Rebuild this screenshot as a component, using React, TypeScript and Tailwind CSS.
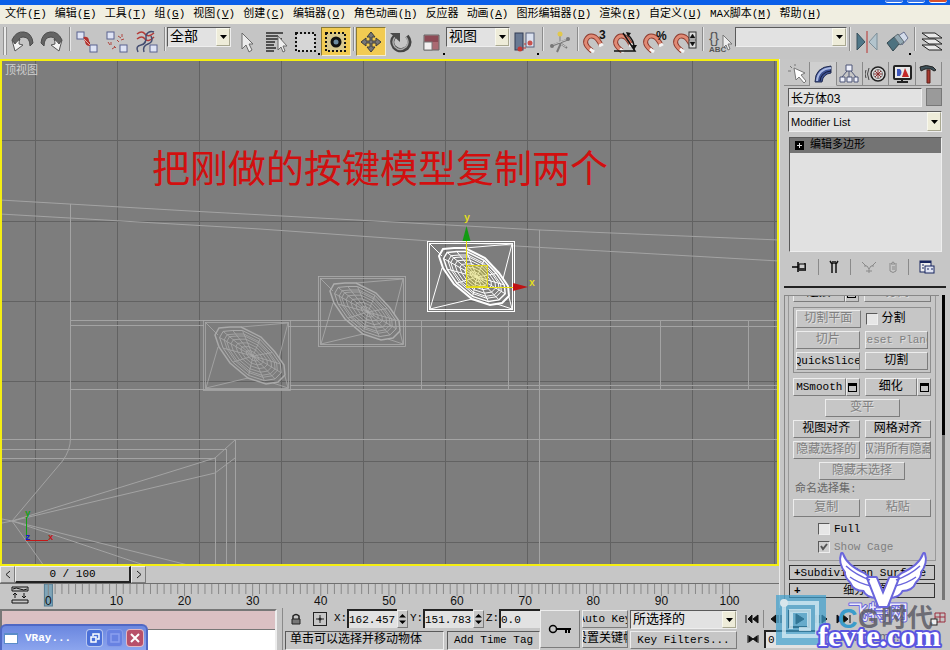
import React from "react";
import clsx from "clsx";

const raised =
  "border border-t-[#ededed] border-l-[#ededed] border-r-[#7c7c7c] border-b-[#7c7c7c]";
const sunken =
  "border border-t-[#5a5a5a] border-l-[#5a5a5a] border-r-[#eeeeee] border-b-[#eeeeee]";

const menus: [string, string][] = [
  ["文件", "F"],
  ["编辑", "E"],
  ["工具", "T"],
  ["组", "G"],
  ["视图", "V"],
  ["创建", "C"],
  ["编辑器", "O"],
  ["角色动画", "h"],
  ["反应器", ""],
  ["动画", "A"],
  ["图形编辑器", "D"],
  ["渲染", "R"],
  ["自定义", "U"],
  ["MAX脚本", "M"],
  ["帮助", "H"],
];

/* ---------- shared controls ---------- */

const Svg = ({ w = 28, h = 28, children }: { w?: number; h?: number; children: React.ReactNode }) => (
  <svg width={w} height={h} viewBox={`0 0 ${w} ${h}`} fill="none" aria-hidden="true" className="shrink-0">
    {children}
  </svg>
);

interface DropProps {
  label: string;
  value: string;
  className?: string;
  textClass?: string;
}

const Drop = ({ label, value, className, textClass = "text-sm" }: DropProps) => (
  <div className={clsx("relative shrink-0 bg-[#e2e2e2]", sunken, className)}>
    <select
      aria-label={label}
      className={clsx("block h-full w-full appearance-none bg-transparent pr-4 pl-0.5 leading-4 outline-none", textClass)}
    >
      <option>{value}</option>
    </select>
    <span className="pointer-events-none absolute inset-y-0 right-0 flex w-[14px] items-center justify-center border border-[#a9a891] border-t-[#f8f8ee] border-l-[#f8f8ee] bg-[#eeecd9]">
      <svg width="7" height="4" viewBox="0 0 7 4" aria-hidden="true">
        <path d="M0 0h7L3.500 4z" fill="#000" />
      </svg>
    </span>
  </div>
);

interface ToolProps {
  label: string;
  active?: boolean;
  flyout?: boolean;
  children: React.ReactNode;
}

const Tool = ({ label, active, flyout, children }: ToolProps) => (
  <button
    type="button"
    aria-label={label}
    className={clsx(
      "relative flex h-[29px] w-[30px] shrink-0 items-center justify-center border",
      active
        ? "border-t-[#8b7a35] border-r-[#f5efd0] border-b-[#f5efd0] border-l-[#8b7a35] bg-[#f2cb52]"
        : "border-transparent",
    )}
  >
    <Svg>{children}</Svg>
    {flyout && <span className="absolute right-0 bottom-0 h-0.5 w-0.5 bg-black" />}
  </button>
);

const Sep = () => (
  <span className="flex h-[24px] w-[5px] shrink-0 justify-center">
    <span className="w-0.5 border-r border-l border-r-[#e6e6e6] border-l-[#8c8c8c]" />
  </span>
);

// tilted horseshoe, poles at the lower right
const Magnet = () => (
  <>
    <path d="M11 23q-8-6-6-11 3-6 9-3 3 2 6 8" stroke="#8c3a2d" strokeWidth="5" />
    <path d="M11 23q-8-6-6-11 3-6 9-3 3 2 6 8" stroke="#e08a75" strokeWidth="3" />
    <path d="M9 21l4 3M18 18l4-2" stroke="#f4f4f4" strokeWidth="3" />
  </>
);

const Box = ({ x, y }: { x: number; y: number }) => (
  <rect x={x} y={y} width="7" height="7" fill="#dfe4f5" stroke="#5a6390" />
);

/* ---------- main toolbar ---------- */

const Toolbar = () => (
  <div className="flex h-[35px] shrink-0 items-start overflow-hidden bg-[#c5c5c5] pt-[3px]">
    <span className="ml-[3px] h-[28px] w-1 shrink-0 border-r border-l border-[#929292] bg-[#e9e9e9]" />
    <Tool label="撤销">
      <path d="M4 12q4-9 12-8 8 1 9 11l-3 3q0-9-7-9-5 0-6 8z" fill="#646464" stroke="#4c4c4c" />
      <path d="M4 12l3 11 8-6-4-1q0-3 1-5-4 3-5 5z" fill="#f3f3f3" stroke="#555" />
    </Tool>
    <Tool label="重做">
      <path d="M24 12q-4-9-12-8-8 1-9 11l3 3q0-9 7-9 5 0 6 8z" fill="#646464" stroke="#4c4c4c" />
      <path d="M24 12l-3 11-8-6 4-1q0-3-1-5 4 3 5 5z" fill="#f3f3f3" stroke="#555" />
    </Tool>
    <Sep />
    <Tool label="选择并链接">
      <Box x={4} y={4} />
      <Box x={17} y={17} />
      <path d="M11 11q3-1 3 2t3 3" stroke="#b2332f" strokeWidth="4" />
      <path d="M11 11l6 6" stroke="#e9aaa2" strokeWidth="1" />
    </Tool>
    <Tool label="断开链接">
      <Box x={4} y={4} />
      <Box x={17} y={17} />
      <path d="M5 14l2 3M8 14v3M15 8l3 2M19 6v3M14 12l2 2M18 12l3-1M11 18l2 2M9 21l3-2" stroke="#b04740" />
    </Tool>
    <Tool label="绑定到空间扭曲">
      <path d="M4 6q5-4 8 0t9-1M4 11q5-4 8 0t9-2" stroke="#b53b38" strokeWidth="1.500" />
      <path d="M5 24q-3-6 3-7t5-10q3-5 8-3M11 24q-2-6 4-8t3-8" stroke="#444d70" strokeWidth="1.500" />
      <Box x={17} y={17} />
    </Tool>
    <Sep />
    <Drop label="选择过滤器" value="全部" className="h-5 w-[64px]" />
    <Tool label="选择对象">
      <path d="M10 5v16l4-4 3 7 3-2-3-6h4z" fill="#ececec" stroke="#6a6a6a" />
    </Tool>
    <Tool label="按名称选择">
      <path d="M4 5h17M4 8h12M4 11h16M4 14h9M4 17h8M4 20h10M4 23h8" stroke="#2a2a2a" strokeWidth="1.500" />
      <path d="M16 8v14l3-3 2 5 2-1-2-5h4z" fill="#efefef" stroke="#6a6a6a" />
    </Tool>
    <Tool label="矩形选择区域" flyout>
      <rect x="5" y="6" width="18" height="17" fill="#d6d6d6" />
      <rect x="4" y="5" width="19" height="18" stroke="#111" strokeWidth="2" strokeDasharray="2 2" />
    </Tool>
    <Tool label="窗口/交叉" active>
      <rect x="4" y="5" width="19" height="18" fill="#d9c98d" stroke="#111" strokeWidth="2" strokeDasharray="2 2" />
      <circle cx="14" cy="14" r="5.500" fill="#111" />
      <circle cx="14" cy="14" r="2.500" fill="#6d8ba0" />
    </Tool>
    <Sep />
    <Tool label="选择并移动" active>
      <path
        d="M14 4l4 5h-3v4h4v-3l5 4-5 4v-3h-4v4h3l-4 5-4-5h3v-4H9v3l-5-4 5-4v3h4V9h-3z"
        fill="#777"
        stroke="#3c3c3c"
      />
    </Tool>
    <Tool label="选择并旋转">
      <path d="M8 8q-5 5-1 11 6 6 13 1 5-6 0-12" stroke="#444" strokeWidth="4" />
      <path d="M8 9q-4 5 0 10 5 5 11 0 4-5 0-10" stroke="#aaa" strokeWidth="1.500" />
      <path d="M3 5h10v9z" fill="#4b4b4b" />
    </Tool>
    <Tool label="选择并缩放" flyout>
      <path d="M7 7h15v15H7z" fill="#ab6a72" stroke="#666" />
      <path d="M8 8h13v6H8z" fill="#8d4a55" />
      <rect x="7" y="14" width="8" height="8" fill="#f3f0f0" stroke="#777" />
    </Tool>
    <Drop label="参考坐标系" value="视图" className="h-5 w-[64px]" />
    <Tool label="使用轴点中心" flyout>
      <rect x="4" y="5" width="8" height="17" fill="#697993" stroke="#333c55" />
      <rect x="15" y="5" width="8" height="14" fill="#dbe1ee" stroke="#56617d" />
      <circle cx="9" cy="21" r="2.500" fill="#c13a36" />
      <circle cx="19" cy="15" r="2.500" fill="#c9514c" />
      <path d="M12 20h3M15 16h-2" stroke="#b33" />
    </Tool>
    <Sep />
    <Tool label="选择并操纵">
      <path d="M14 6v10M5 18l18-7M11 24l4-9M21 20l-7-5" stroke="#7a7a7a" strokeWidth="2" />
      <path d="M14 6v9M6 17l16-6M15 16l5 3" stroke="#c9c9c9" />
      <circle cx="14" cy="6" r="2.500" fill="#e2c84b" />
      <circle cx="22" cy="11" r="2" fill="#777" />
      <circle cx="6" cy="18" r="2" fill="#777" />
    </Tool>
    <Sep />
    <Tool label="三维捕捉">
      <Magnet />
      <text x="18" y="11" fontSize="12" fontWeight="700" fontFamily="Liberation Sans, sans-serif" fill="#111">3</text>
    </Tool>
    <Tool label="角度捕捉">
      <Magnet />
      <path d="M3 23h21L12 5M17 7q6 5 6 13" stroke="#111" strokeWidth="1.500" />
      <path d="M15 4l5 1-3 4zM21 17h5l-3 5z" fill="#111" />
    </Tool>
    <Tool label="百分比捕捉">
      <Magnet />
      <text x="15" y="12" fontSize="12" fontWeight="700" fontFamily="Liberation Sans, sans-serif" fill="#111">%</text>
    </Tool>
    <Tool label="微调器捕捉">
      <Magnet />
      <rect x="18" y="4" width="7" height="16" fill="#ddd" stroke="#333" />
      <path d="M19 10l2.500-4 2.500 4zM19 14h5l-2.500 4zM18 12h7" fill="#111" stroke="#111" strokeWidth=".5" />
    </Tool>
    <Sep />
    <Tool label="编辑命名选择集">
      <text x="3" y="15" fontSize="15" fontFamily="Liberation Sans, sans-serif" fill="#555">{"{}"}</text>
      <text x="3" y="24" fontSize="8" fontWeight="700" fontFamily="Liberation Sans, sans-serif" fill="#555">ABC</text>
      <path d="M17 7v13l3-3 2 5 2-1-2-5h4z" fill="#efefef" stroke="#777" />
    </Tool>
    <Drop label="命名选择集" value="" className="h-5 w-[112px]" />
    <Sep />
    <Tool label="镜像">
      <path d="M4 5v17l8-8z" fill="#4f7788" stroke="#38515c" />
      <path d="M24 5v17l-8-8z" fill="#b3c4cd" stroke="#7d8f99" />
      <path d="M14 3v22" stroke="#b8332f" />
    </Tool>
    <Tool label="对齐" flyout>
      <path d="M4 15l7-6 6 6-7 8z" fill="#4d7280" stroke="#33474f" />
      <path d="M15 8l6-4 4 6-6 7z" fill="#d3dbea" stroke="#6a7390" />
      <path d="M11 9l4-3 6 8-4 3z" fill="#94a9b4" stroke="#5d6a70" />
    </Tool>
    <Sep />
    <Tool label="层管理器">
      <path d="M4 17h13l7 5H11zM4 11h13l7 5H11zM4 5h13l7 5H11z" fill="#e9e9e9" stroke="#222" />
    </Tool>
  </div>
);

/* ---------- viewport ---------- */

const gridX = [35, 117, 199, 281, 363, 445, 527, 610, 692, 774];
const gridY = [140, 221, 301, 381, 461, 542];

const outline = [
  [12, 15], [16, 8], [27, 7], [38, 7], [58, 17], [72, 32], [81, 45],
  [82, 55], [75, 62], [63, 64], [45, 58], [27, 43], [16, 27],
];
const centre = [50, 36];

const ring = (k: number) =>
  outline
    .map(([x, y]) => `${(centre[0] + (x - centre[0]) * k).toFixed(1)},${(centre[1] + (y - centre[1]) * k).toFixed(1)}`)
    .join(" ");

// one key cap: a box with nested oval rings
const KeyMesh = ({ x, y, color, bold }: { x: number; y: number; color: string; bold?: boolean }) => (
  <g transform={`translate(${x} ${y})`} stroke={color} fill="none" strokeWidth={bold ? 1 : 0.8}>
    <rect x=".5" y=".5" width="87" height="70" />
    <rect x="2.500" y="2.500" width="83" height="66" />
    <path d="M3 3l12 12M3 68l12-41M3 68l42-10M85 3l-9 35M85 3L38 7M85 68l-3-12M85 68l-15-5" />
    <polygon points={ring(1)} strokeWidth={bold ? 2 : 1.5} />
    <polygon points={ring(0.88)} strokeWidth={bold ? 1.5 : 1} />
    {[0.76, 0.69, 0.58, 0.45, 0.32, 0.18].map((k) => (
      <polygon key={k} points={ring(k)} />
    ))}
    {outline.map(([px, py], i) => (
      <line
        key={i}
        x1={centre[0]}
        y1={centre[1]}
        x2={centre[0] + (px - centre[0]) * 0.88}
        y2={centre[1] + (py - centre[1]) * 0.88}
      />
    ))}
  </g>
);

const Viewport = () => (
  <div className="relative min-h-0 flex-1 overflow-hidden border-2 border-[#f4ee12] bg-[#7d7d7d]">
    <svg className="block h-full w-full" viewBox="2 61 775 503" preserveAspectRatio="xMinYMin slice" aria-label="顶视图">
      <g stroke="#626262" strokeWidth="1">
        {gridX.map((x) => (
          <line key={x} x1={x + 0.5} x2={x + 0.5} y1="61" y2="566" />
        ))}
        {gridY.map((y) => (
          <line key={y} x1="0" x2="779" y1={y + 0.5} y2={y + 0.5} />
        ))}
      </g>
      <g stroke="#a3a3a3" fill="none" strokeWidth="1">
        <path d="M0 200l190 11 350 19 239 10M0 214l260 15 170 12 120 7 229 13" />
        <path d="M70.500 204v234q0 12-8 23L12 521l32 45" />
        <path d="M70 320.500h709M70 325.500h134M288 326.500h491M70 389.500h709M290 385.500h489" />
        <path d="M421.500 320v70M508.500 320v70M539.500 230v336M660.500 320v70M748.500 320v70" />
        <path d="M0 439.500h779M0 449.500h226M0 458.500h215M215.500 458v108M226.500 449v117M235.500 440v126" />
        <path d="M215 458l20-18M215 473l20-15M12 521l203-63M12 521l203-48M12 521l180 45M12 521l135 45M2 519l10 2-10 2" />
      </g>
      <KeyMesh x={203} y={320} color="#a9a9a9" />
      <KeyMesh x={318} y={276} color="#adadad" />
      <KeyMesh x={427} y={241} color="#ffffff" bold />

      {/* move gizmo */}
      <rect x="466.500" y="265.500" width="21" height="21" fill="#d8cf2e" fillOpacity=".4" stroke="#e0d51c" />
      <path d="M466.500 287V240M466 287.500h48" stroke="#ece414" />
      <path d="M466.500 226l-4 15h8z" fill="#129b12" />
      <path d="M528 287l-15-4v8z" fill="#c01313" />
      <text x="464" y="221" fontSize="10" fontFamily="Liberation Mono, monospace" fontWeight="700" fill="#e2dc1c">y</text>
      <text x="529" y="286" fontSize="10" fontFamily="Liberation Mono, monospace" fontWeight="700" fill="#e2dc1c">x</text>

      {/* world axis */}
      <path d="M26.500 540V517" stroke="#12a012" />
      <path d="M26 540.500h22" stroke="#c31818" />
      <text x="25" y="516" fontSize="9" fontFamily="Liberation Mono, monospace" fontWeight="700" fill="#12a012">y</text>
      <text x="48" y="540" fontSize="9" fontFamily="Liberation Mono, monospace" fontWeight="700" fill="#c31818">x</text>
      <text x="25" y="540" fontSize="9" fontFamily="Liberation Mono, monospace" fontWeight="700" fill="#1818c8">z</text>

      <text x="5" y="74" fontSize="11" fontFamily="Noto Sans CJK SC, sans-serif" fill="#d0d0d0">顶视图</text>
      <text x="152" y="182" fontSize="38" fontFamily="Noto Sans CJK SC, sans-serif" fontWeight="400" fill="#d20f0f">
        把刚做的按键模型复制两个
      </text>
    </svg>
  </div>
);

/* ---------- time slider and track bar ---------- */

const TimeSlider = () => (
  <div className="flex h-[17px] shrink-0 items-stretch text-[11px] leading-[14px]">
    <button type="button" aria-label="上一帧" className={clsx("flex w-[15px] items-center justify-center", raised)}>
      <Svg w={6} h={9}><path d="M5 1L1 4.500 5 8" stroke="#222" /></Svg>
    </button>
    <button type="button" className="w-[116px] border border-t-[#ededed] border-r-2 border-b-2 border-l-[#ededed] border-r-[#222] border-b-[#222]">
      0 / 100
    </button>
    <button type="button" aria-label="下一帧" className={clsx("flex w-[15px] items-center justify-center", raised)}>
      <Svg w={6} h={9}><path d="M1 1l4 3.500L1 8" stroke="#222" /></Svg>
    </button>
  </div>
);

const tickX = (n: number) => `${6.2 + n * 0.8745}%`;

const TrackBar = () => (
  <div className="h-[25px] shrink-0 border-t border-[#6f6f6f]">
    <svg className="block h-6 w-full" aria-label="轨迹栏">
      <rect x="5.700%" y="0" width="8" height="22" fill="#7fa5b8" stroke="#557c92" />
      {Array.from({ length: 101 }, (_, n) => (
        <line key={n} x1={tickX(n)} x2={tickX(n)} y1="0" y2={n % 10 ? 10 : 12} stroke="#888" />
      ))}
      {Array.from({ length: 11 }, (_, n) => (
        <text key={n} x={tickX(n * 10)} y="21" textAnchor="middle" fontSize="12" fontFamily="Liberation Sans, sans-serif" fill="#111">
          {n * 10}
        </text>
      ))}
      <path d="M12 3h16v4H12zM12 16h16v3H12zM13 5q3-2 7 0t7 0M15 14V9m-2 2l2-2 2 2M24 9v5m-2-2l2 2 2-2" stroke="#111" fill="none" />
    </svg>
  </div>
);

/* ---------- command panel ---------- */

const tabs: [string, React.ReactNode][] = [
  ["创建", <path d="M8 5l2 12 3-3 5 6 2-2-5-6 4-2zM4 3l2 2M9 1v2M2 8h3" fill="#fff" stroke="#777" />],
  [
    "修改",
    <>
      <path d="M3 19Q3 4 19 3v7q-8 1-9 9z" fill="#3d5192" stroke="#222c50" />
      <path d="M5 18Q6 6 19 5" stroke="#a9b8e2" strokeWidth="2" />
      <path d="M8 18q1-9 11-10" stroke="#141b3a" />
    </>,
  ],
  ["层次", <path d="M8 2h6v6H8zM2 14h5v5H2zM9 14h5v5H9zM16 14h4v5h-4zM11 8v6M9 8l-5 6M13 8l5 6" fill="#eef0fa" stroke="#4c5577" />],
  [
    "运动",
    <>
      <circle cx="13" cy="11" r="7" fill="#ddd" stroke="#222" strokeWidth="1.500" />
      <circle cx="13" cy="11" r="4.500" stroke="#777" />
      <path d="M13 7v8M9 11h8M10 8l6 6M16 8l-6 6" stroke="#8c3030" />
      <path d="M4 5q-3 6 0 12M1 7q-2 4 0 8" stroke="#444" />
    </>,
  ],
  [
    "显示",
    <>
      <rect x="3" y="3" width="17" height="13" rx="1" fill="#e8e8e8" stroke="#222" strokeWidth="2" />
      <path d="M6 6h3q3 3 0 7H6z" fill="#3e57bd" />
      <path d="M11 14l3-9 4 9z" fill="#c32828" />
      <path d="M6 19h11M11 16v3" stroke="#222" strokeWidth="2" />
    </>,
  ],
  [
    "工具",
    <>
      <path d="M3 4q6-3 13 0l3 3-2 1-3-2H8L4 8z" fill="#3d5058" stroke="#222" />
      <path d="M10 7h3v13h-3z" fill="#a83a30" stroke="#5e201b" />
    </>,
  ],
];

interface PBtnProps {
  children: React.ReactNode;
  off?: boolean;
  className?: string;
}

const PBtn = ({ children, off, className = "flex-1" }: PBtnProps) => (
  <button
    type="button"
    disabled={off}
    className={clsx(
      "flex h-[18px] min-w-0 items-center justify-center overflow-hidden leading-4 whitespace-nowrap",
      raised,
      off ? "text-[#808080] [text-shadow:1px_1px_0_#dedede]" : "text-black",
      className,
    )}
  >
    {children}
  </button>
);

const SettingsBtn = () => (
  <button type="button" aria-label="设置" className={clsx("flex h-[18px] w-[14px] shrink-0 items-center justify-center", raised)}>
    <Svg w={9} h={9}>
      <rect x=".5" y=".5" width="8" height="8" stroke="#000" />
      <path d="M0 2h9" stroke="#000" strokeWidth="2" />
    </Svg>
  </button>
);

const Row = ({ children }: { children: React.ReactNode }) => <div className="flex gap-[5px]">{children}</div>;

const Check = ({ label, checked, off }: { label: string; checked?: boolean; off?: boolean }) => (
  <label className={clsx("flex h-[18px] items-center gap-1", off && "text-[#808080]")}>
    <input
      type="checkbox"
      defaultChecked={checked}
      disabled={off}
      className={clsx("peer h-3 w-3 shrink-0 appearance-none", sunken, off ? "bg-[#cfcfcf]" : "bg-[#e6e6e6]")}
    />
    <svg width="8" height="8" viewBox="0 0 8 8" aria-hidden="true" className="invisible -ml-[14px] mr-0.5 peer-checked:visible">
      <path d="M1 3l2 3 4-5" fill="none" stroke="#555" strokeWidth="2" />
    </svg>
    {label}
  </label>
);

const Rollout = ({ title, centred }: { title: string; centred?: boolean }) => (
  <button type="button" className="flex h-[15px] w-full items-center border border-[#333] px-1 leading-3 whitespace-nowrap">
    <span className="font-bold">+</span>
    <span className={clsx(centred && "flex-1 text-center")}>{title}</span>
  </button>
);

const CommandPanel = () => (
  <aside className="flex w-[171px] shrink-0 flex-col border-l border-[#e8e8e8] pr-2 pl-1">
    <div className="flex h-[27px] shrink-0 pt-[3px]" role="tablist">
      {tabs.map(([name, icon], i) => (
        <button
          key={name}
          type="button"
          role="tab"
          aria-selected={i === 1}
          aria-label={name}
          className={clsx(
            "flex flex-1 items-center justify-center border-r border-b border-r-[#8a8a8a]",
            i === 1 ? "border-b-transparent bg-[#cfcfcf]" : "border-b-[#8a8a8a]",
          )}
        >
          <Svg w={22} h={22}>{icon}</Svg>
        </button>
      ))}
    </div>
    <div className="mt-0.5 flex gap-1 pl-1">
      <input
        aria-label="对象名称"
        defaultValue="长方体03"
        className={clsx("h-[19px] min-w-0 flex-1 bg-[#e2e2e2] px-0.5 font-['Liberation_Sans','Noto_Sans_CJK_SC',sans-serif] text-xs outline-none", sunken)}
      />
      <button type="button" aria-label="对象颜色" className="h-[18px] w-4 border border-[#777] bg-[#9a9a9a]" />
    </div>
    <Drop
      label="修改器列表"
      value="Modifier List"
      className="mt-1 ml-1 h-[21px]"
      textClass="font-['Liberation_Sans',sans-serif] text-[11px]"
    />
    <div className={clsx("mt-[5px] ml-[5px] h-[115px] shrink-0 bg-[#e1e1e1]", sunken)}>
      <div className="flex h-[15px] items-center gap-[6px] bg-[#747474] pl-[5px] text-[11px] leading-[15px]">
        <Svg w={9} h={9}>
          <path d="M0 0h9v9H0z" fill="#000" />
          <path d="M2 4.500h5M4.500 2v5" stroke="#ddd" />
        </Svg>
        编辑多边形
      </div>
    </div>
    <div className="mt-[5px] flex h-[20px] shrink-0 items-center justify-between px-[7px]">
      <button type="button" aria-label="锁定堆栈">
        <Svg w={17} h={14}>
          <path d="M1 7h6M7 2v10M14 3v8" stroke="#000" strokeWidth="1.500" />
          <path d="M8 4h6v6H8z" fill="#ccc" stroke="#000" />
          <path d="M8 8h6v3H8z" fill="#333" />
        </Svg>
      </button>
      <span className="h-4 w-px bg-[#8a8a8a]" />
      <button type="button" aria-label="显示最终结果">
        <Svg w={12} h={14}>
          <path d="M2 1l2 3v9M10 1L8 4v9M5 1v3M7 1v3" stroke="#111" strokeWidth="1.500" />
        </Svg>
      </button>
      <span className="h-4 w-px bg-[#8a8a8a]" />
      <button type="button" aria-label="使唯一" disabled>
        <Svg w={16} h={14}>
          <path d="M1 2l4 4M15 2l-4 4M3 6h3l2 3 2-3h3M8 9v4M5 11h6" stroke="#8a8a8a" />
        </Svg>
      </button>
      <button type="button" aria-label="移除修改器" disabled>
        <Svg w={12} h={14}>
          <path d="M3 5v6q3 3 6 0V5M2 4h8M4 4q2-4 4 0M5 7h3M5 9h3" stroke="#8a8a8a" />
        </Svg>
      </button>
      <span className="h-4 w-px bg-[#8a8a8a]" />
      <button type="button" aria-label="配置修改器集">
        <Svg w={16} h={14}>
          <rect x="1" y="1" width="11" height="11" fill="#eee" stroke="#17255e" />
          <path d="M1 2h11" stroke="#17255e" strokeWidth="2" />
          <rect x="6" y="6" width="9" height="7" fill="#dfe3f2" stroke="#17255e" />
          <path d="M3 5h2M3 8h2M8 9h2M12 9h2" stroke="#17255e" />
        </Svg>
      </button>
    </div>
    <div className="mt-[9px] mr-[-4px] h-0.5 shrink-0 bg-[#222]" />

    <div className="mt-[7px] mr-[-3px] flex min-h-0 flex-1 gap-[3px]">
      <div className="flex min-w-0 flex-1 flex-col overflow-hidden border-t border-l border-[#888]">
        <div className="mx-[3px] flex shrink-0 flex-col gap-[3px] border-r border-b border-l border-[#999] px-1 pb-1">
          <div className="-mt-[12px] flex gap-[5px]">
            <div className="flex flex-1">
              <PBtn>连接</PBtn>
              <SettingsBtn />
            </div>
            <PBtn off>分离</PBtn>
          </div>
          <fieldset className="my-0.5 flex flex-col gap-[3px] border border-[#8e8e8e] p-[2px]">
            <Row>
              <PBtn off>切割平面</PBtn>
              <div className="flex-1"><Check label="分割" /></div>
            </Row>
            <Row>
              <PBtn off>切片</PBtn>
              <PBtn off className="flex-1 text-[11px]">Reset Plane</PBtn>
            </Row>
            <Row>
              <PBtn className="flex-1 text-[11px]">QuickSlice</PBtn>
              <PBtn>切割</PBtn>
            </Row>
          </fieldset>
          <Row>
            <div className="flex min-w-0 flex-1">
              <PBtn className="flex-1 text-[11px]">MSmooth</PBtn>
              <SettingsBtn />
            </div>
            <div className="flex min-w-0 flex-1">
              <PBtn>细化</PBtn>
              <SettingsBtn />
            </div>
          </Row>
          <PBtn off className="w-[75px] self-center">变平</PBtn>
          <Row>
            <PBtn>视图对齐</PBtn>
            <PBtn>网格对齐</PBtn>
          </Row>
          <Row>
            <PBtn off>隐藏选择的</PBtn>
            <PBtn off>取消所有隐藏</PBtn>
          </Row>
          <PBtn off className="w-[86px] self-center">隐藏未选择</PBtn>
          <p className="-mt-0.5 h-[15px] pl-0.5 text-[11px] leading-4 text-[#666]">命名选择集:</p>
          <Row>
            <PBtn off>复制</PBtn>
            <PBtn off>粘贴</PBtn>
          </Row>
          <div className="pl-[25px] text-[11px]">
            <Check label="Full" />
            <Check label="Show Cage" checked off />
          </div>
        </div>
        <div className="mt-1 flex flex-col gap-[3px] px-1 text-[11px]">
          <Rollout title="Subdivision Surface" />
          <Rollout title="细分置换" centred />
        </div>
      </div>
      <div className="mb-2 flex w-[3px] flex-col">
        <span className="h-[140px] bg-black" />
        <span className="flex-1 bg-[#777]" />
      </div>
    </div>
  </aside>
);

/* ---------- status bar ---------- */

const Coord = ({ axis, value, spin = true }: { axis: string; value: string; spin?: boolean }) => (
  <div className={clsx("flex items-center", spin ? "shrink-0" : "min-w-0 flex-1")}>
    <label htmlFor={`coord-${axis}`} className="w-[13px] text-[11px]">{axis}:</label>
    <input
      id={`coord-${axis}`}
      defaultValue={value}
      className={clsx(
        "h-[19px] border-t-2 border-l-2 border-[#222] bg-[#e2e2e2] text-[11px] outline-none",
        spin ? "w-[50px]" : "w-full min-w-0",
      )}
    />
    {spin && (
      <button type="button" aria-label={`${axis} 微调`} className={clsx("flex h-[18px] w-[11px] items-center justify-center", raised)}>
        <Svg w={7} h={12}>
          <path d="M0 4.500L3.500 1 7 4.500zM0 7.500h7L3.500 11z" fill="#000" />
        </Svg>
      </button>
    )}
  </div>
);

const playback: [string, string][] = [
  ["转至开头", "M1 2v8M3 6l4-4v8zM8 6l5-4v8z"],
  ["上一关键帧", "M1 6l5-4v8zM8 2v8M11 2v8"],
  ["播放", "M4 1l8 5-8 5z"],
  ["下一关键帧", "M2 2v8M5 2v8M8 2l5 4-5 4z"],
  ["转至结尾", "M1 2l5 4-5 4zM7 2l5 4-5 4zM14 2v8"],
];

const StatusBar = () => (
  <footer className="flex h-[42px] shrink-0 bg-[#c6c6c6]">
    <div className="mt-px flex w-[277px] shrink-0 flex-col border-2 border-b-0 border-t-[#777] border-r-[#ededed] border-l-[#777]">
      <div className="h-[19px] border-b border-[#777] bg-[#dbc0c3]" />
      <div className="flex-1 bg-white" />
    </div>
    <div className="ml-[5px] flex w-[258px] shrink-0 flex-col border-l border-[#8a8a8a] pl-0.5">
      <div className="mt-px flex h-[20px] items-center gap-[2px]">
        <button type="button" aria-label="选择锁定" className="flex w-[21px] shrink-0 justify-center">
          <Svg w={10} h={12}>
            <path d="M2 6V3q3-3 6 0v3" stroke="#222" strokeWidth="1.500" />
            <path d="M1 6h8v5H1z" fill="#777" stroke="#222" />
          </Svg>
        </button>
        <button type="button" aria-label="绝对模式" className="flex w-[24px] shrink-0 justify-center">
          <Svg w={14} h={14}>
            <rect x=".5" y=".5" width="13" height="13" stroke="#222" />
            <path d="M7 3v8M3 7h8" stroke="#222" />
            <circle cx="7" cy="7" r="1.500" fill="#222" />
          </Svg>
        </button>
        <Coord axis="X" value="162.457" />
        <Coord axis="Y" value="151.783" />
        <Coord axis="Z" value="0.0" spin={false} />
      </div>
      <div className="mt-[3px] flex flex-1 gap-[3px]">
        <p className={clsx("flex-1 pl-1 leading-[17px] whitespace-nowrap", sunken)}>单击可以选择并移动物体</p>
        <button type="button" className={clsx("w-[93px] text-[11px]", sunken)}>Add Time Tag</button>
      </div>
    </div>
    <button type="button" aria-label="设置关键点" className={clsx("my-0.5 flex w-[40px] shrink-0 items-center justify-center", raised)}>
      <Svg w={24} h={12}>
        <circle cx="5" cy="6" r="3.500" stroke="#000" strokeWidth="1.500" />
        <path d="M9 6h14M18 6v4M21 6v4" stroke="#000" strokeWidth="2" />
      </Svg>
    </button>
    <div className="mt-0.5 ml-0.5 flex w-[46px] shrink-0 flex-col gap-0.5 text-[11px]">
      <PBtn className="w-full">Auto Key</PBtn>
      <PBtn className="w-full text-xs">设置关键帧</PBtn>
    </div>
    <div className="mt-0.5 ml-0.5 flex w-[107px] shrink-0 flex-col gap-0.5">
      <Drop label="关键点模式" value="所选择的" className="h-[19px]" textClass="text-[13px]" />
      <PBtn className="w-full text-[11px]">Key Filters...</PBtn>
    </div>
    <div className="mt-px flex min-w-0 flex-1 flex-col overflow-hidden pr-1 pl-[5px]">
      <div className="flex h-[20px] items-center">
        {playback.map(([name, d], i) => (
          <button
            key={name}
            type="button"
            aria-label={name}
            className={clsx(
              "flex h-[18px] w-[22px] shrink-0 items-center justify-center",
              i === 2 && "border-2 border-[#111]",
              i === 0 && "mr-0.5 border-r border-[#888]",
            )}
          >
            <Svg w={15} h={12}><path d={d} fill="#111" stroke="#111" /></Svg>
          </button>
        ))}
        <button type="button" aria-label="最大化视口" className="ml-auto">
          <Svg w={16} h={14}>
            <path d="M5 1h10v9H5zM10 1v9M5 5h10" stroke="#9a2c3c" />
            <rect x="1" y="7" width="6" height="6" fill="#eee" stroke="#222" />
          </Svg>
        </button>
      </div>
      <div className="flex h-[20px] items-center">
        <button type="button" aria-label="关键点模式切换" className="flex w-[22px] shrink-0 justify-center">
          <Svg w={12} h={10}><path d="M1 1v8M6 5l4-3v6zM6 5L2 2v6zM11 1v8" fill="#111" stroke="#111" /></Svg>
        </button>
        <input aria-label="当前帧" defaultValue="0" className="h-[18px] w-[60px] border-t-2 border-l-2 border-[#222] bg-[#e2e2e2] pl-0.5 text-[11px]" />
      </div>
    </div>
  </footer>
);

const VRayWindow = () => (
  <div className="absolute bottom-0 left-0 flex h-[26px] w-[148px] items-center gap-[3px] rounded-t-md border-2 border-b-0 border-[#5068c4] bg-gradient-to-b from-[#6b87df] to-[#8ca5ee] px-0.5 text-white">
    <span className="h-[11px] w-[14px] border border-t-2 border-[#5a8cc8] bg-white" />
    <span className="ml-1 flex-1 text-[11px] font-bold">VRay...</span>
    <button type="button" aria-label="还原" className="flex h-[18px] w-[17px] items-center justify-center rounded-sm border border-white/60 bg-[#4b70d8]">
      <Svg w={10} h={10}><path d="M3 3V1h6v5H7M1 4h5v5H1z" stroke="#fff" strokeWidth="1.500" /></Svg>
    </button>
    <button type="button" aria-label="最大化" className="flex h-[18px] w-[17px] items-center justify-center rounded-sm border border-white/20 bg-[#6882e2]">
      <Svg w={10} h={10}><path d="M1 1h8v8H1z" stroke="#8ba0f0" strokeWidth="1.500" /></Svg>
    </button>
    <button type="button" aria-label="关闭" className="flex h-[18px] w-[18px] items-center justify-center rounded-sm border border-white/60 bg-[#b8506a]">
      <Svg w={10} h={10}><path d="M1 1l8 8M9 1L1 9" stroke="#fff" strokeWidth="2" /></Svg>
    </button>
  </div>
);

// site logos stamped over the bottom right corner
const Watermark = () => (
  <svg
    className="pointer-events-none absolute right-0 bottom-0"
    width="178"
    height="102"
    viewBox="772 548 178 102"
    fill="none"
    aria-hidden="true"
  >
    <rect x="776" y="595" width="50" height="50" fill="#3f9fcd" fillOpacity=".7" />
    <path d="M784 603h33v33h-33zM791 629v-18h18v18h-10" stroke="#d9edf5" strokeWidth="4" strokeOpacity=".75" />
    <circle cx="784" cy="603" r="4" fill="#d8e6ec" />
    <g fill="#fff" stroke="#6a66dc" strokeWidth="2" strokeLinejoin="round" paintOrder="stroke">
      <text x="848" y="620" fontSize="20" fontFamily="Noto Sans CJK SC, sans-serif" fillOpacity=".9">飞特网</text>
    </g>
    <g fontFamily="Liberation Sans, Noto Sans CJK SC, sans-serif" fontWeight="700">
      <text x="838" y="628" fontSize="27" fill="#3b9ccb">C</text>
      <text x="858" y="628" fontSize="27" fill="#5b5b66" fillOpacity=".85">G</text>
      <text x="881" y="627" fontSize="26" fill="#55555f" fillOpacity=".8">时代</text>
    </g>
    <g fill="#fff" stroke="#6a66dc" strokeWidth="4" strokeLinejoin="round" paintOrder="stroke">
      <path d="M842 554q4 12 22 20 10 6 13 23-10 0-13-7-10 0-13-8-6-6-5-10-7-9-4-18z" />
      <path d="M924 554q-4 12-22 20-10 6-13 23 10 0 13-7 10 0 13-8 6-6 5-10 7-9 4-18z" />
      <path d="M868 578h8l7 17 7-17h8l-11 28h-8z" />
    </g>
    <path d="M846 566q10 9 24 14M850 577q8 6 21 9M920 566q-10 9-24 14M916 577q-8 6-21 9" stroke="#6a66dc" strokeWidth="1.500" />
    <text x="832" y="641" fontSize="12" fontFamily="Liberation Sans, sans-serif" fill="#66667c">www.cgtime.com.cn</text>
    <text
      x="818"
      y="646"
      fontSize="30"
      fontWeight="700"
      fontFamily="Liberation Serif, serif"
      fill="#fff"
      stroke="#5a55e0"
      strokeWidth="4"
      strokeLinejoin="round"
      paintOrder="stroke"
    >
      fevte.com
    </text>
  </svg>
);

export default function App() {
  return (
    <div className="relative flex h-screen flex-col overflow-hidden bg-[#c6c6c6] font-['Liberation_Mono','Noto_Sans_CJK_SC',monospace] text-xs text-black">
      <header className="flex h-[5px] shrink-0 justify-end gap-1 bg-[#0b5fe8] pr-[3px]">
        <span className="h-[3px] w-[18px] rounded-b border-b border-white bg-[#3f78e6]" />
        <span className="h-[3px] w-[18px] rounded-b border-b border-white bg-[#3f78e6]" />
        <span className="h-[3px] w-[18px] rounded-b border-b border-white bg-[#d8512e]" />
      </header>
      <nav className="flex h-[19px] shrink-0 items-center gap-2 overflow-hidden bg-[#f0eee1] pl-[5px] text-[11px] leading-[19px] whitespace-nowrap">
        {menus.map(([name, hotkey]) => (
          <button key={name} type="button" className="shrink-0">
            {name}
            {hotkey && (
              <>
                (<span className="underline">{hotkey}</span>)
              </>
            )}
          </button>
        ))}
      </nav>
      <Toolbar />
      <main className="flex min-h-0 flex-1">
        <div className="flex min-w-0 flex-1 flex-col">
          <Viewport />
          <TimeSlider />
          <TrackBar />
        </div>
        <CommandPanel />
      </main>
      <StatusBar />
      <VRayWindow />
      <Watermark />
    </div>
  );
}
